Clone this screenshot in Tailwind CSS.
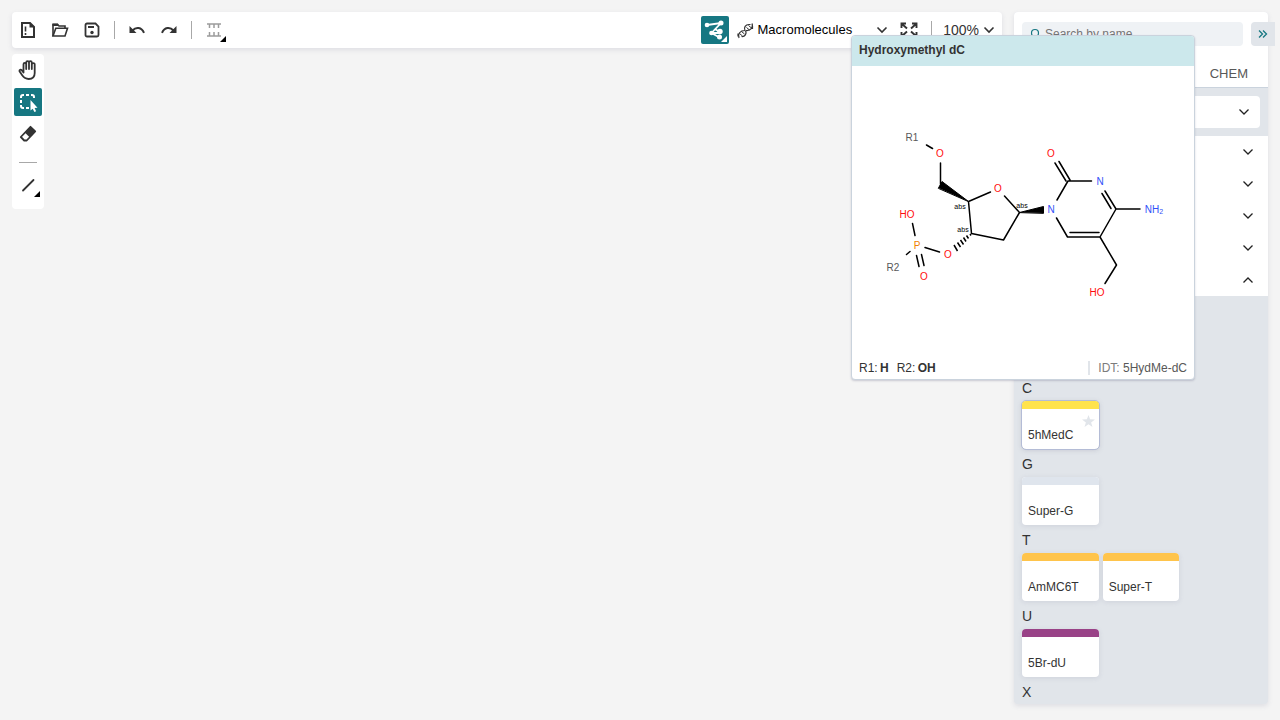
<!DOCTYPE html>
<html lang="en">
<head>
<meta charset="utf-8">
<meta name="viewport" content="width=device-width, initial-scale=1">
<title>Macromolecules editor</title>
<script src="https://cdn.jsdelivr.net/npm/@tailwindcss/browser@4"></script>
</head>
<body class="relative flex h-screen gap-3 overflow-hidden bg-[#f4f4f4] px-3 pt-3 pb-4 font-['Liberation_Sans',Arial,sans-serif] text-xs text-[#333333]">

<div class="flex min-w-0 flex-1 flex-col items-start gap-[6px]">
  <header class="flex h-9 w-full shrink-0 items-center rounded bg-white pr-[7px] pl-[2px] shadow-[0_2px_5px_rgba(103,104,132,0.15)]">
    <button aria-label="New" class="flex h-7 w-7 items-center justify-center">
      <svg width="16" height="18" viewBox="0 0 16 18" fill="none" stroke="#333" stroke-width="2"><path d="M2 2h8l4 4v10H2z"/><path d="M9.500 1v5.500H15z" fill="#333" stroke="none"/><path d="M5.500 5.500v5M5.500 12v2" stroke-width="1.600"/></svg>
    </button>
    <button aria-label="Open" class="ml-1 flex h-7 w-7 items-center justify-center">
      <svg width="18" height="16" viewBox="0 0 18 16" fill="none" stroke="#333" stroke-width="1.600"><path d="M2 14V2.500h4.500l1.500 1.500h6v2.500"/><path d="M1.500 1.500h5.500l1 2.500h-6.500z" fill="#333" stroke="none"/><path d="M4.800 6.300H16.500L14 14H2z"/></svg>
    </button>
    <button aria-label="Save" class="ml-1 flex h-7 w-7 items-center justify-center">
      <svg width="16" height="16" viewBox="0 0 16 16" fill="none" stroke="#333" stroke-width="1.800"><path d="M1.500 3a1.500 1.500 0 0 1 1.500-1.500h8.500l3 3V13a1.500 1.500 0 0 1-1.500 1.500H3A1.500 1.500 0 0 1 1.500 13z"/><path d="M4 5h6" stroke-width="2"/><circle cx="8" cy="10.500" r="1.700" fill="#333" stroke="none"/></svg>
    </button>
    <span class="mx-2 h-[18px] w-px bg-[#a8a8a8]"></span>
    <button aria-label="Undo" class="flex h-7 w-7 items-center justify-center">
      <svg width="18" height="16" viewBox="0 0 18 16" fill="none" stroke="#333" stroke-width="2"><path d="M4.500 8.500C8 4.500 13.500 5 16 10.800"/><path d="M1.500 4v7h7z" fill="#333" stroke="none"/></svg>
    </button>
    <button aria-label="Redo" class="ml-1 flex h-7 w-7 items-center justify-center">
      <svg width="18" height="16" viewBox="0 0 18 16" fill="none" stroke="#333" stroke-width="2"><path d="M13.500 8.500C10 4.500 4.500 5 2 10.800"/><path d="M16.500 4v7h-7z" fill="#333" stroke="none"/></svg>
    </button>
    <span class="mx-2 h-[18px] w-px bg-[#a8a8a8]"></span>
    <button aria-label="Layout" class="flex h-7 w-7 items-center justify-center">
      <svg width="28" height="28" viewBox="0 0 28 28" fill="none" stroke="#9c9c9c" stroke-width="1.500"><path d="M7 8h14M9.500 8v4M14 8v4M18.500 8v4M7 20h14M9.500 20v-4M14 20v-4M18.500 20v-4"/><path d="M26 20v6h-6z" fill="#000" stroke="none"/></svg>
    </button>

    <button aria-label="Switch to macromolecules mode" class="ml-auto flex h-7 w-7 items-center justify-center rounded-xs bg-[#167782]">
      <svg width="28" height="28" viewBox="0 0 28 28" fill="none" stroke="#fff" stroke-width="1.800"><path d="M6 9l14-2L10.500 17h8M14 13l4.500 3M10.500 17l8 4.500"/><g fill="#fff" stroke="none"><circle cx="6" cy="9" r="2.300"/><circle cx="20" cy="7" r="2.500"/><circle cx="10.500" cy="17" r="2.300"/><circle cx="19" cy="15.500" r="2.700"/><circle cx="18.500" cy="21" r="2.500"/><path d="M26 20v6h-6z"/></g></svg>
    </button>
    <button class="ml-2 flex h-7 items-center text-[13px] text-black">
      <svg width="17" height="17" viewBox="0 0 17 17" class="mr-1" fill="none" stroke="#333" stroke-width="1.200"><path d="M8 8.500C6.500 5.500 8.500 2.500 12 2.500M15 1.500c1.500 4-1.500 7.500-6 7M8.500 8.500C10 11.500 8 15 4.500 14.500M2 16C.5 12 3 8.500 8 8.500M12 2.500h1.500M15.500 4v3M1 11.500v3"/><path d="M11.500 3.500l3 2.500M9.500 5.500l3 2.500M4.500 9.500l3 2.500M2.500 11.500l3 2.500" stroke-width="1"/></svg>
      Macromolecules
      <svg width="12" height="8" viewBox="0 0 12 8" class="ml-6" fill="none" stroke="#333" stroke-width="1.600"><path d="M1.500 1.500L6 6l4.500-4.500"/></svg>
    </button>
    <button aria-label="Fullscreen" class="ml-[7px] flex h-7 w-7 items-center justify-center">
      <svg width="18" height="16" viewBox="0 0 18 16" fill="none" stroke="#333" stroke-width="1.900"><path d="M1.500 6V1.500H6M1.500 1.500L7 6.500M12 1.500h4.500V6M16.500 1.500L11 6.500M1.500 10v4.500H6M1.500 14.500L7 9.500M12 14.500h4.500V10M16.500 14.500L11 9.500"/></svg>
    </button>
    <span class="mr-[11px] ml-2 h-[18px] w-px bg-[#a8a8a8]"></span>
    <button class="flex h-7 items-center text-sm">100%
      <svg width="12" height="8" viewBox="0 0 12 8" class="ml-1" fill="none" stroke="#333" stroke-width="1.600"><path d="M1.500 1.500L6 6l4.500-4.500"/></svg>
    </button>
  </header>

  <nav aria-label="Tools" class="flex w-8 flex-col items-center rounded bg-white pt-[2px] pb-[10px]">
    <button aria-label="Hand" class="flex h-7 w-7 items-center justify-center">
      <svg width="20" height="22" viewBox="0 0 20 22" fill="none" stroke="#333" stroke-width="1.800" stroke-linejoin="round" stroke-linecap="round"><path d="M5.500 13.500V5.200a1.300 1.300 0 0 1 2.700 0V10 3.500a1.400 1.400 0 0 1 2.800 0V10 3.500a1.400 1.400 0 0 1 2.800 0V10 5.500a1.400 1.400 0 0 1 2.900 0V14c0 4-2.500 6-6 6-3 0-5-1.500-6.500-3.700L1.500 12.200c-.4-1.400 1.200-2 2.200-1z"/></svg>
    </button>
    <button aria-label="Select rectangle" class="mt-1 flex h-7 w-7 items-center justify-center rounded-xs bg-[#167782]">
      <svg width="28" height="28" viewBox="0 0 28 28" fill="none" stroke="#fff" stroke-width="2"><path d="M7 10V9q0-2 2-2h1M12 7h3M17 7h1q2 0 2 2v1M7 12v3M7 17v1q0 2 2 2h1M12 20h3"/><path d="M16.500 12v10.500l2.200-1.700 1.700 3.200 1.700-.8-1.500-3.200 2.900-.3z" fill="#fff" stroke="none"/></svg>
    </button>
    <button aria-label="Erase" class="mt-1 flex h-7 w-7 items-center justify-center">
      <svg width="18" height="18" viewBox="0 0 18 18" fill="none" stroke="#333" stroke-width="1.800" stroke-linejoin="round"><path d="M11.500 1.800l4.700 4.700-8.500 9H5.200L1.800 12z"/><path d="M11.500 1.500l5 5-5.700 6-5-5z" fill="#333" stroke="none"/></svg>
    </button>
    <span class="mt-[14px] mb-2 h-px w-[18px] bg-[#a8a8a8]"></span>
    <button aria-label="Bond" class="flex h-7 w-7 items-center justify-center">
      <svg width="28" height="28" viewBox="0 0 28 28"><path d="M9 19.500l10.500-10.500" stroke="#333" stroke-width="1.800" stroke-linecap="round"/><path d="M26 20v6h-6z"/></svg>
    </button>
  </nav>
</div>

<aside class="relative flex w-[254px] shrink-0 flex-col overflow-visible rounded bg-[#e1e5ea] shadow-[0_2px_5px_rgba(103,104,132,0.15)]">
  <div class="shrink-0 rounded-t border-b border-[#cad3dd] bg-white">
    <div class="pt-[10px] pr-[25px] pl-2">
      <label class="flex h-6 items-center gap-[3px] rounded bg-[#eff2f5] px-2">
        <svg width="12" height="12" viewBox="0 0 12 12" class="shrink-0 -scale-x-100" fill="none" stroke="#167782" stroke-width="1.200"><circle cx="7" cy="5" r="3.500"/><path d="M9.500 7.500L12 11"/></svg>
        <input type="text" aria-label="Search by name" placeholder="Search by name" class="min-w-0 flex-1 bg-transparent text-xs outline-none placeholder:text-[#757575]">
      </label>
    </div>
    <div role="tablist" class="flex h-[41px] items-center justify-end pt-[14px] pr-5">
      <button role="tab" class="text-[13px] text-[#585858]">CHEM</button>
    </div>
  </div>
  <button aria-label="Hide library" class="absolute top-[10px] -right-[7px] flex h-6 w-6 items-center justify-center rounded-l bg-[#e1e5ea]">
    <svg width="10" height="8" viewBox="0 0 10 8" fill="none" stroke="#167782" stroke-width="1.300"><path d="M1 .5L4.500 4 1 7.500M5 .5L8.500 4 5 7.500"/></svg>
  </button>
  <div class="shrink-0 p-2">
    <button aria-label="Library filter" class="flex h-8 w-full items-center justify-end rounded bg-white pr-[11px]">
      <svg width="10" height="6" viewBox="0 0 10 6" fill="none" stroke="#222" stroke-width="1.300"><path d="M.5.5L5 5 9.500.5"/></svg>
    </button>
  </div>
  <div class="flex shrink-0 flex-col bg-white">
    <button aria-label="Section 1" class="flex h-8 items-center justify-end pr-[15px]"><svg width="10" height="6" viewBox="0 0 10 6" fill="none" stroke="#222" stroke-width="1.300"><path d="M.5.5L5 5 9.500.5"/></svg></button>
    <button aria-label="Section 2" class="flex h-8 items-center justify-end pr-[15px]"><svg width="10" height="6" viewBox="0 0 10 6" fill="none" stroke="#222" stroke-width="1.300"><path d="M.5.5L5 5 9.500.5"/></svg></button>
    <button aria-label="Section 3" class="flex h-8 items-center justify-end pr-[15px]"><svg width="10" height="6" viewBox="0 0 10 6" fill="none" stroke="#222" stroke-width="1.300"><path d="M.5.5L5 5 9.500.5"/></svg></button>
    <button aria-label="Section 4" class="flex h-8 items-center justify-end pr-[15px]"><svg width="10" height="6" viewBox="0 0 10 6" fill="none" stroke="#222" stroke-width="1.300"><path d="M.5.5L5 5 9.500.5"/></svg></button>
    <button aria-label="Section 5" aria-expanded="true" class="flex h-8 items-center justify-end pr-[15px]"><svg width="10" height="6" viewBox="0 0 10 6" fill="none" stroke="#222" stroke-width="1.300"><path d="M.5 5.500L5 1l4.500 4.500"/></svg></button>
  </div>
  <div class="min-h-0 flex-1 overflow-hidden px-2 pt-[77px]">
    <section>
      <h3 class="flex h-7 items-center pt-[2px] text-sm">C</h3>
      <div class="grid grid-cols-3 gap-1">
        <button class="relative flex h-12 items-end overflow-hidden rounded bg-white px-[6px] pb-[6px] shadow-[0_1px_5px_rgba(103,104,132,0.25)] outline outline-[#b4bcd6]">
          <span class="absolute inset-x-0 top-0 h-2 bg-[#ffe34c]"></span>5hMedC
          <svg width="13" height="12" viewBox="0 0 13 12" class="absolute top-[14px] right-1" fill="#e1e5ea"><path d="M6.500 0l1.600 4.300 4.900.2-3.900 2.900L10.500 12l-4-2.700-4 2.700 1.400-4.600L0 4.500l4.900-.2z"/></svg>
        </button>
      </div>
    </section>
    <section>
      <h3 class="flex h-7 items-center pt-[2px] text-sm">G</h3>
      <div class="grid grid-cols-3 gap-1">
        <button class="relative flex h-12 items-end overflow-hidden rounded bg-white px-[6px] pb-[6px] shadow-[0_1px_5px_rgba(103,104,132,0.15)]"><span class="absolute inset-x-0 top-0 h-2 bg-[#dfe5ed]"></span>Super-G</button>
      </div>
    </section>
    <section>
      <h3 class="flex h-7 items-center pt-[2px] text-sm">T</h3>
      <div class="grid grid-cols-3 gap-1">
        <button class="relative flex h-12 items-end overflow-hidden rounded bg-white px-[6px] pb-[6px] shadow-[0_1px_5px_rgba(103,104,132,0.15)]"><span class="absolute inset-x-0 top-0 h-2 bg-[#ffc44b]"></span>AmMC6T</button>
        <button class="relative flex h-12 items-end overflow-hidden rounded bg-white px-[6px] pb-[6px] shadow-[0_1px_5px_rgba(103,104,132,0.15)]"><span class="absolute inset-x-0 top-0 h-2 bg-[#ffc44b]"></span>Super-T</button>
      </div>
    </section>
    <section>
      <h3 class="flex h-7 items-center pt-[2px] text-sm">U</h3>
      <div class="grid grid-cols-3 gap-1">
        <button class="relative flex h-12 items-end overflow-hidden rounded bg-white px-[6px] pb-[6px] shadow-[0_1px_5px_rgba(103,104,132,0.15)]"><span class="absolute inset-x-0 top-0 h-2 bg-[#994287]"></span>5Br-dU</button>
      </div>
    </section>
    <section>
      <h3 class="flex h-7 items-center pt-[2px] text-sm">X</h3>
    </section>
  </div>
</aside>

<div role="tooltip" class="absolute top-[35px] right-[85px] flex w-[344px] flex-col overflow-hidden rounded border border-[#cad3dd] bg-white shadow-[0_1px_2px_rgba(103,104,132,0.3)]">
  <h2 class="flex h-[30px] items-center bg-[#cce8ec] px-[7px] pb-[2px] font-bold">Hydroxymethyl dC</h2>
  <svg viewBox="852 66 342 290" class="h-[290px] w-full" fill="none" stroke="#000" stroke-width="1.500" stroke-linecap="round" stroke-linejoin="round" role="img" aria-label="Structure of Hydroxymethyl dC">
    <path d="M926.500 145l6 3.500M940.500 163v21M968.500 201.500l22-9.500M1004.500 196l15 16.500-16 27.500-32-6.500-3-32M1057 200l11-19h23.500M1105 191l11 18-16 28h-32.500l-11-19M1102 193.500l9 15M1099 232.500h-29M1116 209h24M1100 237l16.500 28-11.500 18.500M1066 181l-11-18M1070 180l-11-18.500M912.500 223.500l2.500 12M925 247.500l14.500 4.500M910 251.500l-3.500 3M916.500 255.500l2.500 11M921.500 254.500l2.500 11"/>
    <path d="M968.500 201.500L942 181.500l-3.500 6.500z" fill="#000" stroke-width="1"/>
    <path d="M1019.500 212.500l24-6v6.500z" fill="#000" stroke-width="1"/>
    <path d="M970 234l1 1.500M966.500 235.500l2 3M963.500 237.500l2.500 4M960.500 240l3 4.500M957.500 242.500l3 4.500M954 245l3.500 6" stroke-linecap="butt"/>
    <g stroke="none" font-family="Liberation Sans, Arial, sans-serif" font-size="10" text-anchor="middle">
      <g fill="#ff0d0d"><text x="940" y="157">O</text><text x="998" y="192">O</text><text x="1051" y="157">O</text><text x="907" y="218">HO</text><text x="948" y="258">O</text><text x="924" y="280">O</text><text x="1097" y="296">HO</text></g>
      <g fill="#3050f8"><text x="1051" y="213">N</text><text x="1100" y="185">N</text><text x="1154" y="213">NH<tspan font-size="7" dy="1">2</tspan></text></g>
      <text x="917" y="249" fill="#f08000">P</text>
      <g fill="#585858"><text x="912" y="141">R1</text><text x="893" y="271">R2</text></g>
      <g fill="#000" font-size="7"><text x="960" y="209">abs</text><text x="963" y="232">abs</text><text x="1022" y="208">abs</text></g>
    </g>
  </svg>
  <div class="flex h-[23px] items-center justify-between px-[7px] pt-px">
    <p class="flex gap-2"><span>R1: <b class="-ml-px">H</b></span><span>R2: <b class="-ml-px">OH</b></span></p>
    <p class="border-l-2 border-[#e1e5ea] pl-2 leading-[14px] text-[#585858]"><span class="text-[#7c7c7c]">IDT:</span> 5HydMe-dC</p>
  </div>
</div>
</body>
</html>
